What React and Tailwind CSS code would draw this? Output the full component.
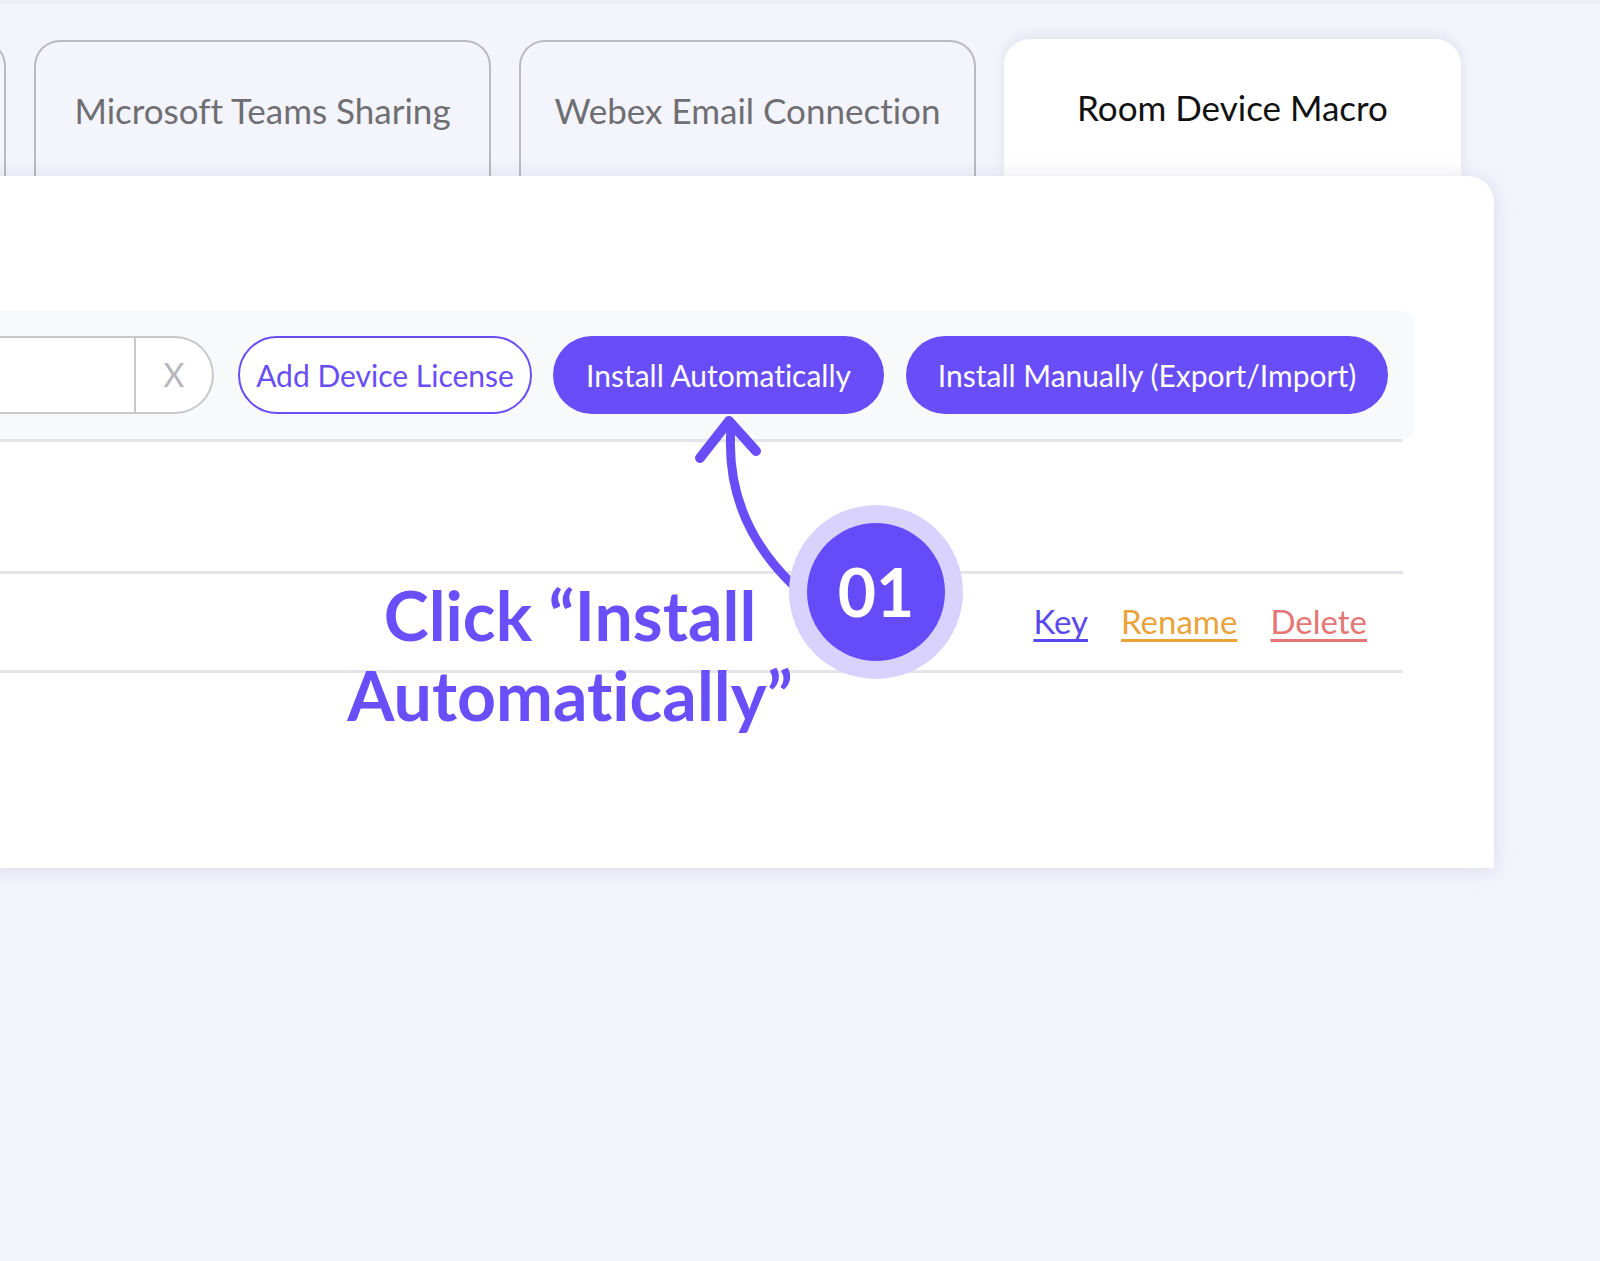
import React from 'react';

const tabBase =
  'w-[457px] h-[136px] shrink-0 rounded-t-[26px] flex items-center justify-center text-[35px]';

function Tab({ label, active }) {
  if (active) {
    return (
      <div className={`${tabBase} -mt-px h-[137px] bg-white text-[#111] shadow-[0_-4px_14px_rgba(20,20,60,0.08)]`}>
        {label}
      </div>
    );
  }
  return (
    <div className={`${tabBase} pt-[2px] border-2 border-b-0 border-[#b9b9c0] bg-[#f4f4fd] text-[#6f6f73]`}>
      {label}
    </div>
  );
}

export default function App() {
  return (
    <div className="relative h-[1261px] overflow-hidden bg-[#f4f4fd] font-['Lato','Noto_Sans',sans-serif] [font-variant-ligatures:none]">
      <div className="h-[4px] bg-[#ededf3]" />

      {/* tabs (first one is scrolled off to the left) */}
      <div className="mt-[36px] -ml-[451px] flex gap-[28px]">
        <Tab label="" />
        <Tab label="Microsoft Teams Sharing" />
        <Tab label="Webex Email Connection" />
        <Tab label="Room Device Macro" active />
      </div>

      {/* panel */}
      <div className="relative z-10 -ml-[20px] w-[1514px] h-[692px] rounded-tr-[26px] bg-white shadow-[0_2px_22px_rgba(30,30,70,0.12)]">
        <div className="pt-[135px]">
          <div className="w-[1435px] h-[128px] rounded-r-xl bg-[#f8f9fb] flex items-center pr-[27px]">
            <div className="flex flex-1 h-[78px] rounded-r-full border-2 border-l-0 border-[#c8c8cc] bg-white">
              <div className="flex-1 border-r-2 border-[#c8c8cc]" />
              <div className="w-[76px] flex items-center justify-center text-[32px] text-[#b7b7bb]">X</div>
            </div>
            <button className="shrink-0 ml-[24px] h-[78px] w-[294px] rounded-full border-2 border-[#684df8] bg-white text-[30px] text-[#684df8]">
              Add Device License
            </button>
            <button className="shrink-0 ml-[21px] h-[78px] w-[331px] rounded-full bg-[#684df8] text-[30px] text-white">
              Install Automatically
            </button>
            <button className="shrink-0 ml-[22px] h-[78px] w-[482px] rounded-full bg-[#684df8] text-[30px] text-white">
              Install Manually (Export/Import)
            </button>
          </div>

          <div className="w-[1423px] border-t-[3px] border-[#e3e5e9]">
            <div className="h-[132px] border-b-[3px] border-[#e3e5e9]" />
            <div className="h-[99px] border-b-[3px] border-[#e3e5e9] flex items-center justify-end pr-[36px] gap-[33px] text-[33px]">
              <a className="underline underline-offset-[5px] text-[#5a47f0]">Key</a>
              <a className="underline underline-offset-[5px] text-[#eaa33a]">Rename</a>
              <a className="underline underline-offset-[5px] text-[#e67676]">Delete</a>
            </div>
          </div>
        </div>
      </div>

      {/* annotation */}
      <svg className="absolute left-0 top-0 z-20 pointer-events-none" width="1600" height="1261" viewBox="0 0 1600 1261">
        <path d="M 792 584 C 752 545, 726 495, 731 428" fill="none" stroke="#684df8" strokeWidth="9" strokeLinecap="round" />
        <path d="M 700 458 L 729 421 L 756 451" fill="none" stroke="#684df8" strokeWidth="10" strokeLinecap="round" strokeLinejoin="round" />
      </svg>

      <div className="absolute z-30 left-[789px] top-[505px] w-[174px] h-[174px] rounded-full bg-[#d9d2fd] flex items-center justify-center">
        <div className="w-[138px] h-[138px] rounded-full bg-[#664cf9] flex items-center justify-center text-white font-bold text-[66px] leading-none">
          01
        </div>
      </div>

      <div className="absolute z-30 left-[300px] top-[575px] w-[540px] text-center font-bold text-[68px] leading-[80px] text-[#694ffa]">
        Click “Install
        <br />
        Automatically”
      </div>
    </div>
  );
}
